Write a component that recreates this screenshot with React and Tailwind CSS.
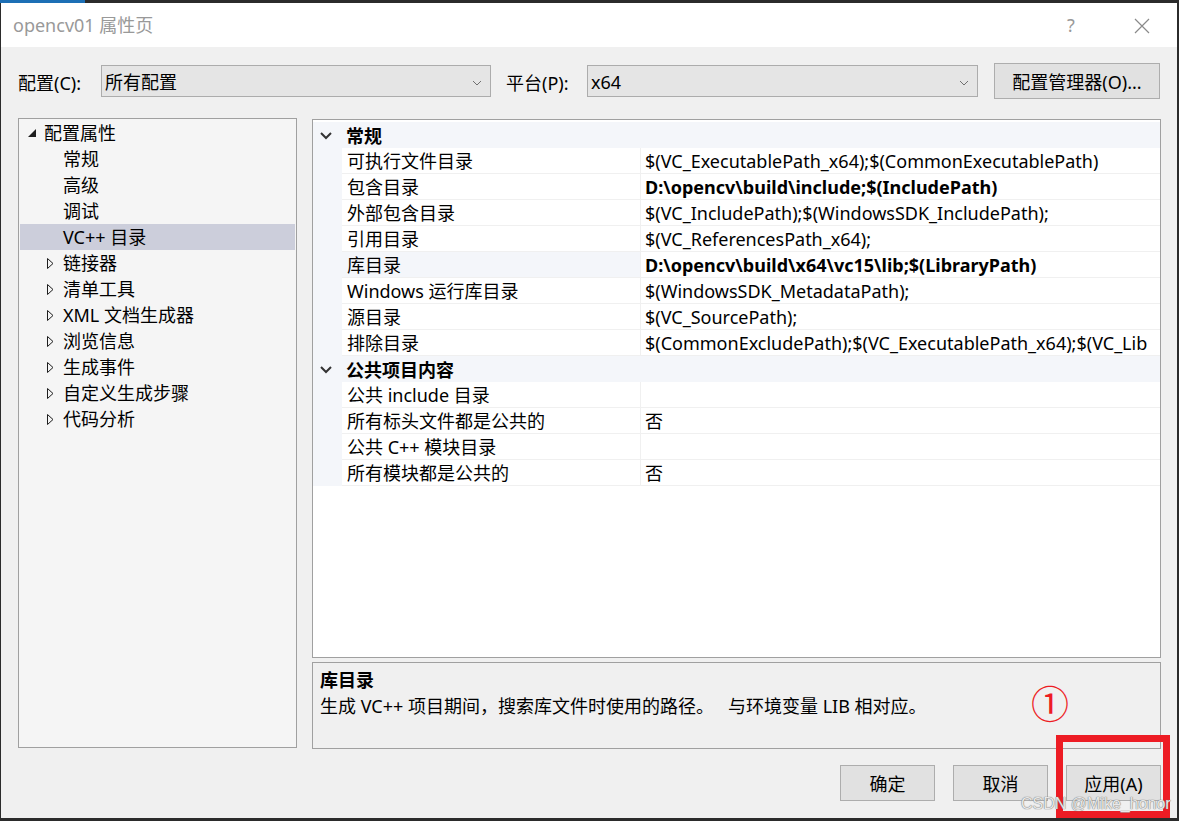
import React from 'react';

const FONT = { fontFamily: '"Noto Sans", "Noto Sans CJK SC", sans-serif' };

const treeItems = [
  { label: '常规', child: true },
  { label: '高级', child: true },
  { label: '调试', child: true },
  { label: 'VC++ 目录', child: true, selected: true },
  { label: '链接器' },
  { label: '清单工具' },
  { label: 'XML 文档生成器' },
  { label: '浏览信息' },
  { label: '生成事件' },
  { label: '自定义生成步骤' },
  { label: '代码分析' },
];

const sections = [
  {
    title: '常规',
    rows: [
      ['可执行文件目录', '$(VC_ExecutablePath_x64);$(CommonExecutablePath)'],
      ['包含目录', 'D:\\opencv\\build\\include;$(IncludePath)', true],
      ['外部包含目录', '$(VC_IncludePath);$(WindowsSDK_IncludePath);'],
      ['引用目录', '$(VC_ReferencesPath_x64);'],
      ['库目录', 'D:\\opencv\\build\\x64\\vc15\\lib;$(LibraryPath)', true, true],
      ['Windows 运行库目录', '$(WindowsSDK_MetadataPath);'],
      ['源目录', '$(VC_SourcePath);'],
      ['排除目录', '$(CommonExcludePath);$(VC_ExecutablePath_x64);$(VC_Lib'],
    ],
  },
  {
    title: '公共项目内容',
    rows: [
      ['公共 include 目录', ''],
      ['所有标头文件都是公共的', '否'],
      ['公共 C++ 模块目录', ''],
      ['所有模块都是公共的', '否'],
    ],
  },
];

function Chevron({ className = '' }) {
  return (
    <svg width="12" height="8" viewBox="0 0 12 8" className={className}>
      <polyline points="1,1 6,6 11,1" fill="none" stroke="currentColor" strokeWidth="2" />
    </svg>
  );
}

function Select({ value, width }) {
  return (
    <div
      className="h-[32px] bg-[#e5e5e5] border border-[#acacac] flex items-center justify-between pl-[3px] pr-[8px] pt-[3px]"
      style={{ width }}
    >
      <span>{value}</span>
      <svg width="10" height="6" viewBox="0 0 10 6">
        <polyline points="1,1 5,5 9,1" fill="none" stroke="#707070" strokeWidth="1" />
      </svg>
    </div>
  );
}

function Button({ children, className = '' }) {
  return (
    <div className={`h-[36px] bg-[#e1e1e1] border border-[#adadad] flex items-center justify-center pt-[2px] ${className}`}>
      {children}
    </div>
  );
}

export default function App() {
  return (
    <div className="relative w-[1179px] h-[821px] bg-[#2b2b2b] overflow-hidden text-[18px] text-black" style={FONT}>
      {/* top strip */}
      <div className="flex h-[3px]">
        <div className="w-[85px] bg-[#1c6fb5]" />
      </div>

      {/* window */}
      <div className="ml-[1px] w-[1176px] h-[815px] flex flex-col bg-[#f0f0f0]">
        {/* title bar */}
        <div className="h-[44px] bg-white flex items-center shrink-0 pt-[1px]">
          <span className="ml-[12px] text-[#999999] text-[18px]">opencv01 属性页</span>
          <span className="ml-auto text-[#999999] text-[18px] w-[14px]">?</span>
          <svg width="16" height="16" viewBox="0 0 16 16" className="ml-[53px] mr-[27px]">
            <path d="M1 1 L15 15 M15 1 L1 15" stroke="#8a8a8a" strokeWidth="1.2" fill="none" />
          </svg>
        </div>

        {/* body */}
        <div className="flex-1 pl-[17px] pr-[16px] pt-[16px]">
          {/* config row */}
          <div className="flex items-center h-[36px]">
            <span className="w-[83px] pt-[4px]">配置(C):</span>
            <Select value="所有配置" width={390} />
            <span className="ml-[15px] w-[81px] pt-[4px]">平台(P):</span>
            <Select value="x64" width={391} />
            <Button className="ml-[16px] w-[166px]">配置管理器(O)...</Button>
          </div>

          {/* main */}
          <div className="flex mt-[19px]">
            {/* tree */}
            <div className="w-[279px] h-[630px] bg-[#f5f5f5] border border-[#a0a0a0] pt-[1px] px-[1px]">
              <div className="h-[26px] flex items-center">
                <svg width="9" height="9" viewBox="0 0 9 9" className="ml-[8px] mr-[7px]">
                  <polygon points="8,0 8,8 0,8" fill="#1e1e1e" />
                </svg>
                <span>配置属性</span>
              </div>
              {treeItems.map((it) => (
                <div
                  key={it.label}
                  className={`h-[26px] flex items-center ${it.selected ? 'bg-[#cccedb]' : ''}`}
                >
                  {it.child ? (
                    <span className="w-[43px]" />
                  ) : (
                    <svg width="7" height="11" viewBox="0 0 7 11" className="ml-[27px] mr-[9px]">
                      <polygon points="0.5,0.5 6,5.5 0.5,10.5" fill="none" stroke="#1e1e1e" strokeWidth="1" />
                    </svg>
                  )}
                  <span>{it.label}</span>
                </div>
              ))}
            </div>

            {/* right column */}
            <div className="ml-[15px] w-[849px] flex flex-col">
              {/* property grid */}
              <div className="mt-[1px] h-[539px] bg-white border border-[#a0a0a0] overflow-hidden pt-[2px]">
                {sections.map((sec) => (
                  <div key={sec.title}>
                    <div className="h-[26px] bg-[#f4f6fa] flex items-center pt-[2px]">
                      <Chevron className="ml-[7px] mr-[14px] text-[#333]" />
                      <span className="font-bold">{sec.title}</span>
                    </div>
                    {sec.rows.map(([name, value, bold, sel]) => (
                      <div key={name} className="h-[26px] flex">
                        <div className="w-[29px] bg-[#f4f6fa] shrink-0" />
                        <div
                          className={`w-[298px] shrink-0 border-b border-[#f0f0f0] pl-[5px] pt-[2px] flex items-center whitespace-nowrap ${
                            sel ? 'bg-[#f4f6fa]' : ''
                          }`}
                        >
                          {name}
                        </div>
                        <div
                          className={`flex-1 border-b border-l border-[#f0f0f0] pl-[4px] pt-[2px] flex items-center whitespace-nowrap overflow-hidden ${
                            bold ? 'font-bold' : ''
                          }`}
                        >
                          {value}
                        </div>
                      </div>
                    ))}
                  </div>
                ))}
              </div>

              {/* description */}
              <div className="mt-[4px] h-[87px] border border-[#a0a0a0] px-[7px] pt-[4px]">
                <div className="font-bold leading-[26px]">库目录</div>
                <div className="leading-[26px] whitespace-pre">生成 VC++ 项目期间，搜索库文件时使用的路径。   与环境变量 LIB 相对应。</div>
              </div>
            </div>
          </div>

          {/* buttons */}
          <div className="flex justify-end mt-[16px] gap-[18px]">
            <Button className="w-[95px]">确定</Button>
            <Button className="w-[95px]">取消</Button>
            <Button className="w-[95px]">应用(A)</Button>
          </div>
        </div>
      </div>

      {/* annotation overlay */}
      <div className="absolute left-[1031px] top-[684px] text-[#ed1c24] text-[38px] leading-none">①</div>
      <div className="absolute left-[1056px] top-[735px] w-[114px] h-[83px] border-[7px] border-[#ed1c24]" />
      <div
        className="absolute left-[1021px] top-[796px] text-[16px] text-[#e8e8e8] leading-none"
        style={{
          fontFamily: '"Liberation Sans", Arial, sans-serif',
          textShadow: '0 0 1px #777, 0 0 1px #777',
        }}
      >
        CSDN @Mike_honor
      </div>
    </div>
  );
}
